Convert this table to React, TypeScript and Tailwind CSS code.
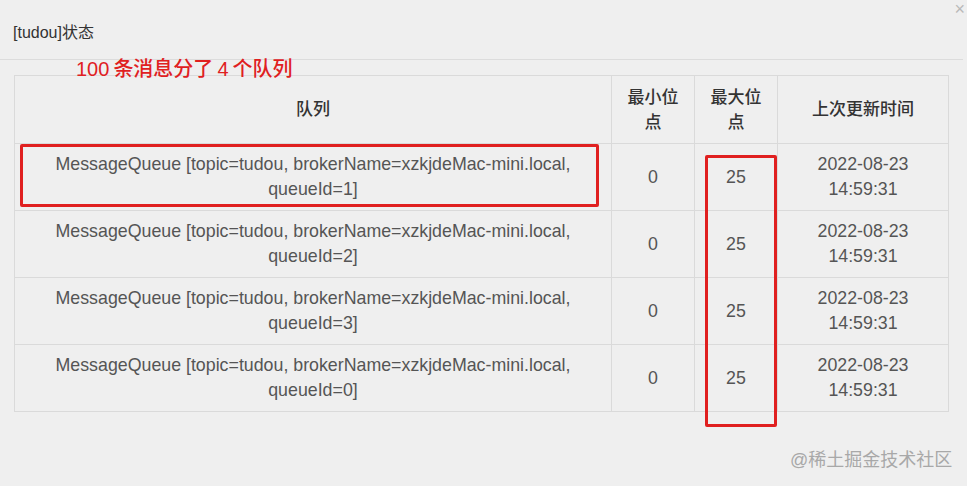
import React from "react";

const rows = [1, 2, 3, 0].map((id) => ({
  topic: "tudou",
  broker: "xzkjdeMac-mini.local",
  queueId: id,
  min: 0,
  max: 25,
  date: "2022-08-23",
  time: "14:59:31",
}));

const App: React.FC = () => {
  return (
    <div className="relative w-[967px] h-[486px] overflow-hidden bg-[#efefef] font-['Liberation_Sans','Noto_Sans_CJK_SC',sans-serif] text-[16px] text-[#333]">
      <div className="h-[60px] mr-[4px] border-b border-[#dcdcdc] pl-[13px] pt-[20px] leading-[26px]">
        [tudou]状态
      </div>
      <span className="absolute right-[2px] top-[2px] text-[18px] leading-[14px] text-[#b9b9b9]">×</span>

      <div className="relative pl-[14px] pt-[15px]">
        <table className="w-[934px] table-fixed border-collapse text-center leading-[25px]">
          <colgroup>
            <col className="w-[597px]" />
            <col className="w-[83px]" />
            <col className="w-[83px]" />
            <col className="w-[171px]" />
          </colgroup>
          <thead>
            <tr className="h-[68px] text-[17px] text-[#333]">
              <th className="border border-[#dadada] px-3 font-medium">队列</th>
              <th className="border border-[#dadada] px-3 font-medium">最小位点</th>
              <th className="border border-[#dadada] px-3 font-medium">最大位点</th>
              <th className="border border-[#dadada] px-3 font-medium">上次更新时间</th>
            </tr>
          </thead>
          <tbody className="text-[17.8px] text-[#555]">
            {rows.map((r) => (
              <tr key={r.queueId} className="h-[67px]">
                <td className="border border-[#dadada] px-3">
                  MessageQueue [topic={r.topic}, brokerName={r.broker},
                  <br />
                  queueId={r.queueId}]
                </td>
                <td className="border border-[#dadada] px-3">{r.min}</td>
                <td className="border border-[#dadada] px-3">{r.max}</td>
                <td className="border border-[#dadada] px-3">
                  <div>{r.date}</div>
                  <div>{r.time}</div>
                </td>
              </tr>
            ))}
          </tbody>
        </table>

        {/* annotations drawn over the table */}
        <div className="absolute left-[76px] top-[-4px] text-[20px] font-medium leading-[26px] text-[#e0201f]">
          100<span className="ml-[4px]">条消息分了</span>
          <span className="mx-[4px]">4</span>个队列
        </div>
        <div className="absolute left-[20px] top-[84px] w-[579px] h-[63px] rounded-[2px] border-[3px] border-[#e02020]" />
        <div className="absolute left-[705px] top-[95px] w-[72px] h-[272px] rounded-[2px] border-[3px] border-[#e02020]" />
      </div>

      <div className="absolute left-[790px] top-[447px] text-[18px] leading-[26px] text-[#a8a8a8]">
        @稀土掘金技术社区
      </div>
    </div>
  );
};

export default App;
